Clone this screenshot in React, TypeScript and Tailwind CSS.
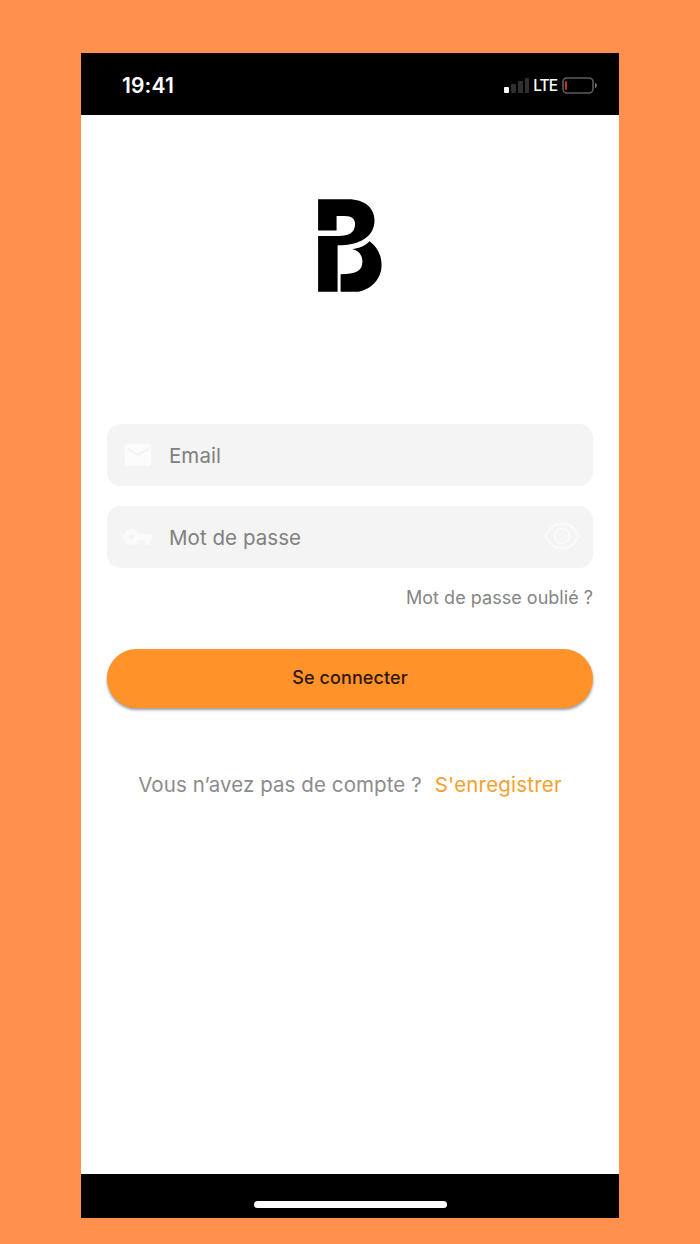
import type { ReactNode } from "react";
import { MdEmail, MdVpnKey } from "react-icons/md";

const Logo = () => (
  <svg viewBox="54 43 190 277" className="h-[93px] w-[64px]" fill="#000">
    <path d="M54 44H144C193 44 222 70 222 106C222 155 178 181 112 181V319H54V153H115C146 153 164 142 164 118C164 103 155 94 133 94H109V137H54Z" />
    <path d="M121 267V319H175C215 310 243 279 243 240C243 210 230 185 207 169C195 182 178 190 155 192C175 197 186 210 186 230C186 258 165 267 121 267Z" />
  </svg>
);

const EyeIcon = () => (
  <svg viewBox="0 0 36 30" className="h-[30px] w-9" fill="none" stroke="#fafafa" strokeWidth="2">
    <path d="M1.500 14C5 6 11 1.500 18 1.500S31 6 34.500 14C31 22 25 26.500 18 26.500S5 22 1.500 14Z" />
    <circle cx="18" cy="14" r="7.200" />
    <path d="M18 10.500a3.500 3.500 0 1 1-3.500 3.500c2.500 .5 4-1 3.500-3.500Z" strokeWidth="1" />
  </svg>
);

const StatusBar = () => (
  <header className="flex h-[62px] items-center justify-between bg-black pt-[3px] pr-[21px] pl-[41px] text-white">
    <span className="text-[21px] font-semibold tracking-[0.15px]">19:41</span>
    <div className="flex items-center">
      <div className="flex h-4 items-end gap-[2px] pb-px">
        <span className="h-[6px] w-[5px] rounded-[1px] bg-white" />
        <span className="h-[9px] w-[5px] rounded-[1px] bg-[#303030]" />
        <span className="h-3 w-[5px] rounded-[1px] bg-[#303030]" />
        <span className="h-[15px] w-[4px] rounded-[1px] bg-[#303030]" />
      </div>
      <span className="ml-1 pt-px text-[15.5px] font-medium tracking-[-1px]">LTE</span>
      <svg viewBox="0 0 36 18" className="ml-[5px] h-[18px] w-9">
        <rect x="1" y="1" width="30" height="15" rx="4" fill="none" stroke="#5c5c5c" strokeWidth="1.6" />
        <rect x="3" y="4" width="2" height="9" rx="1" fill="#c92b2b" />
        <path d="M33 6c2.500 .5 2.500 4.500 0 5Z" fill="#777" />
      </svg>
    </div>
  </header>
);

type FieldProps = {
  icon: ReactNode;
  label: string;
  children?: ReactNode;
};

const Field = ({ icon, label, children }: FieldProps) => (
  <div className="flex h-[62px] items-center rounded-[14px] bg-[#f4f4f4] pr-[13px] pl-[15px]">
    {icon}
    <span className="ml-[15px] flex-1 pt-[3px] text-[20.5px] tracking-[0.05px] text-[#808080]">{label}</span>
    {children}
  </div>
);

export default function App() {
  return (
    <div className="h-[1244px] bg-[#ff914d] px-[81px] pt-[53px] font-[Inter,sans-serif]">
      <div className="flex h-[1165px] flex-col bg-white">
        <StatusBar />

        <main className="flex flex-1 flex-col px-[26px] pt-[84px]">
          <div className="flex justify-center">
            <Logo />
          </div>

          <div className="mt-[132px] flex flex-col gap-[19.5px]">
            <Field icon={<MdEmail className="size-8 text-[#fcfcfc]" />} label="Email" />
            <Field icon={<MdVpnKey className="size-8 text-[#fafafa]" />} label="Mot de passe">
              <EyeIcon />
            </Field>
          </div>

          <a className="mt-4 self-end text-[18px] leading-7 tracking-[0.03px] text-[#858585]">
            Mot de passe oublié ?
          </a>

          <button
            type="button"
            className="mt-[37px] h-[59px] rounded-full bg-[#ff9329] pb-px text-[18px] font-medium tracking-[0.1px] text-[#321509] shadow-[0_2px_3px_rgba(0,0,0,0.4)]"
          >
            Se connecter
          </button>

          <p className="mt-[61.5px] flex justify-center gap-[13px] text-[20.5px] leading-8 whitespace-nowrap text-[#8c8c8c]">
            <span className="tracking-[0.08px]">Vous n’avez pas de compte ?</span>
            <a className="tracking-[0.2px] text-[#f5a02d]">S'enregistrer</a>
          </p>
        </main>

        <footer className="flex h-11 items-end justify-center bg-black pb-[10px]">
          <div className="h-[7px] w-[193px] rounded-full bg-white" />
        </footer>
      </div>
    </div>
  );
}
